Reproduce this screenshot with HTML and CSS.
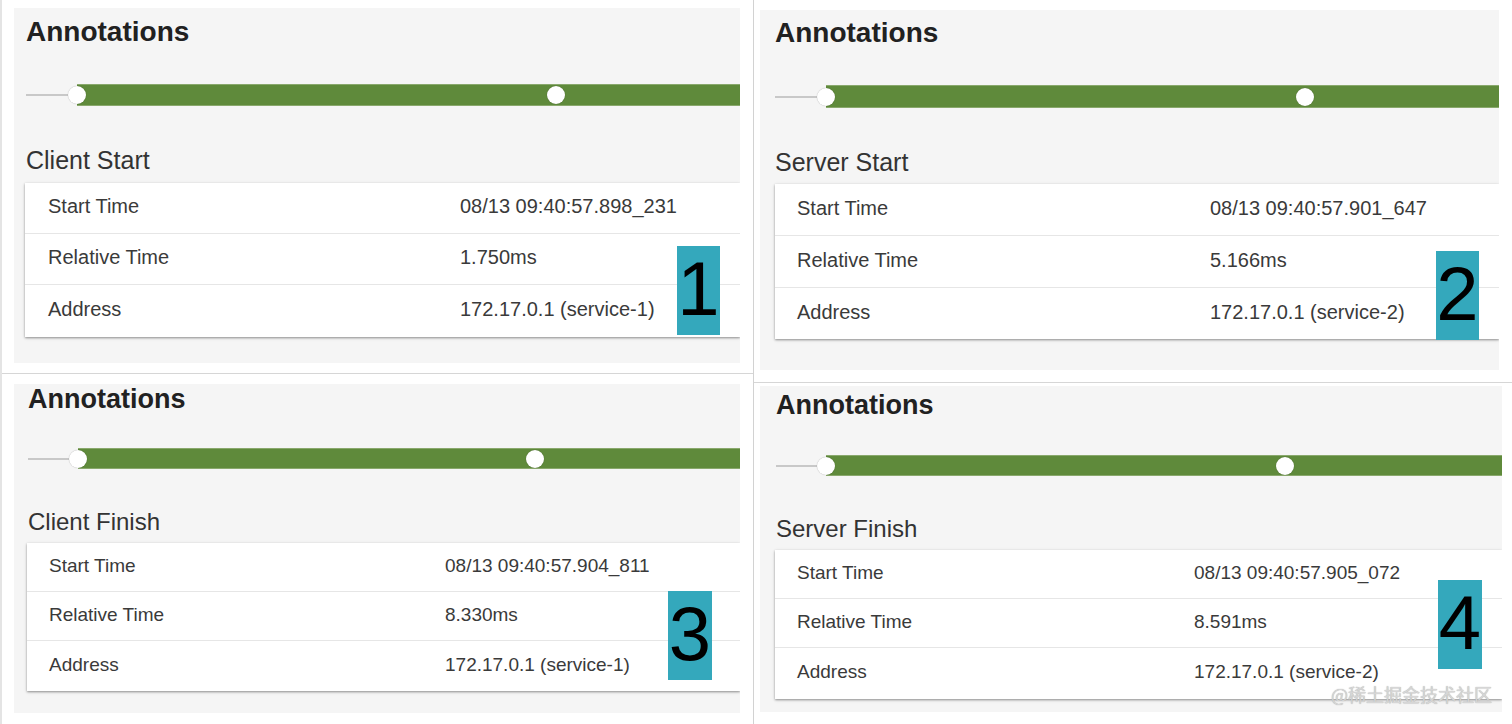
FILE: index.html
```html
<!DOCTYPE html>
<html lang="en">
<head>
<meta charset="utf-8">
<title>Annotations</title>
<link rel="stylesheet" href="styles.css">
</head>
<body>
<div class="board">
  <div class="col col-left">
    <section class="shot shot-1">
      <div class="pane">
        <h2 class="title">Annotations</h2>
        <div class="slider"><span class="rail"></span><span class="range"></span><span class="knob knob-a"></span><span class="knob knob-b"></span></div>
        <h3 class="subtitle">Client Start</h3>
        <div class="card">
          <div class="row"><span>Start Time</span><span>08/13 09:40:57.898_231</span></div>
          <div class="row"><span>Relative Time</span><span>1.750ms</span></div>
          <div class="row"><span>Address</span><span>172.17.0.1 (service-1)</span></div>
        </div>
      </div>
      <div class="badge">1</div>
    </section>
    <section class="shot shot-3">
      <div class="pane">
        <h2 class="title">Annotations</h2>
        <div class="slider"><span class="rail"></span><span class="range"></span><span class="knob knob-a"></span><span class="knob knob-b"></span></div>
        <h3 class="subtitle">Client Finish</h3>
        <div class="card">
          <div class="row"><span>Start Time</span><span>08/13 09:40:57.904_811</span></div>
          <div class="row"><span>Relative Time</span><span>8.330ms</span></div>
          <div class="row"><span>Address</span><span>172.17.0.1 (service-1)</span></div>
        </div>
      </div>
      <div class="badge">3</div>
    </section>
  </div>
  <div class="col col-right">
    <section class="shot shot-2">
      <div class="pane">
        <h2 class="title">Annotations</h2>
        <div class="slider"><span class="rail"></span><span class="range"></span><span class="knob knob-a"></span><span class="knob knob-b"></span></div>
        <h3 class="subtitle">Server Start</h3>
        <div class="card">
          <div class="row"><span>Start Time</span><span>08/13 09:40:57.901_647</span></div>
          <div class="row"><span>Relative Time</span><span>5.166ms</span></div>
          <div class="row"><span>Address</span><span>172.17.0.1 (service-2)</span></div>
        </div>
      </div>
      <div class="badge">2</div>
    </section>
    <section class="shot shot-4">
      <div class="pane">
        <h2 class="title">Annotations</h2>
        <div class="slider"><span class="rail"></span><span class="range"></span><span class="knob knob-a"></span><span class="knob knob-b"></span></div>
        <h3 class="subtitle">Server Finish</h3>
        <div class="card">
          <div class="row"><span>Start Time</span><span>08/13 09:40:57.905_072</span></div>
          <div class="row"><span>Relative Time</span><span>8.591ms</span></div>
          <div class="row"><span>Address</span><span>172.17.0.1 (service-2)</span></div>
        </div>
      </div>
      <div class="badge">4</div>
      <div class="watermark">@稀土掘金技术社区</div>
    </section>
  </div>
</div>
</body>
</html>
```
FILE: styles.css
```css
* { box-sizing: border-box; }

body {
  margin: 0;
  width: 1512px;
  height: 724px;
  overflow: hidden;
  background: #ffffff;
  font-family: "Liberation Sans", Arial, sans-serif;
}

.board {
  display: flex;
  height: 724px;
}

.col {
  display: flex;
  flex-direction: column;
  height: 724px;
}

.col-left {
  width: 754px;
  border-left: 2px solid #e4e4e4;
  border-right: 1px solid #d2d2d2;
}

.col-right {
  flex: 1;
}

.shot {
  position: relative;
  flex: none;
}

.shot-1 { height: 374px; border-bottom: 1px solid #d6d6d6; }
.shot-2 { height: 383px; border-bottom: 1px solid #d6d6d6; }
.shot-3, .shot-4 { flex: 1; min-height: 0; }

.pane {
  background: #f5f5f5;
  overflow-x: clip;
  overflow-y: visible;
  display: flex;
  flex-direction: column;
}

.title {
  margin: 0;
  font-size: 28px;
  line-height: 34px;
  font-weight: bold;
  color: #212121;
}

.slider {
  position: relative;
  display: flex;
  align-items: center;
  height: 22px;
}

.rail {
  flex: none;
  width: 51px;
  height: 2px;
  background: #c8c8c8;
}

.range {
  flex: 1;
  align-self: stretch;
  background: #5f8a3b;
  border-top: 1px solid #89a86c;
  border-bottom: 1px solid #89a86c;
}

.knob {
  position: absolute;
  top: 50%;
  width: 18px;
  height: 18px;
  margin: -9px 0 0 -9px;
  border-radius: 50%;
  background: #ffffff;
  box-shadow: 0 0 1px rgba(0, 0, 0, 0.35);
}

.subtitle {
  margin: 0;
  font-size: 25px;
  line-height: 28px;
  font-weight: normal;
  color: #333333;
}

.card {
  background: #ffffff;
  box-shadow: 0 1px 2px rgba(0, 0, 0, 0.35), 0 1px 4px rgba(0, 0, 0, 0.12);
}

.row {
  display: grid;
  grid-template-columns: 412px 1fr;
  align-items: center;
  height: 51px;
  padding: 0 0 3px 23px;
  font-size: 20px;
  color: #3a3a3a;
  border-bottom: 1px solid #e6e6e6;
  white-space: nowrap;
}

.row:last-child { border-bottom: none; height: 52px; }

.badge {
  position: absolute;
  width: 43px;
  height: 89px;
  background: #34a8bc;
  color: #000000;
  font-size: 76px;
  line-height: 86px;
  text-align: center;
}

.watermark {
  position: absolute;
  left: 577px;
  top: 299px;
  font-family: "Noto Sans CJK SC", "Liberation Sans", sans-serif;
  font-size: 18px;
  line-height: 24px;
  color: #d6d6d6;
  text-shadow: 0 0 1px #a0a0a0;
  white-space: nowrap;
}

/* shot 1: client start */
.shot-1 .pane { margin: 8px 0 0 12px; width: 726px; height: 355px; padding-left: 12px; }
.shot-1 .title { margin-top: 7px; }
.shot-1 .slider { margin-top: 35px; }
.shot-1 .subtitle { margin-top: 40px; }
.shot-1 .card { margin: 9px 0 0 -1px; }
.shot-1 .knob-a { left: 51px; }
.shot-1 .knob-b { left: 530px; }
.shot-1 .badge { left: 675px; top: 246px; }

/* shot 2: server start */
.shot-2 .pane { margin: 10px 0 0 6px; width: 739px; height: 360px; padding-left: 15px; }
.shot-2 .title { margin-top: 6px; }
.shot-2 .slider { margin-top: 35px; height: 23px; }
.shot-2 .subtitle { margin-top: 40px; }
.shot-2 .card { margin-top: 8px; }
.shot-2 .row { padding-left: 22px; grid-template-columns: 413px 1fr; height: 52px; }
.shot-2 .row:last-child { height: 51px; }
.shot-2 .knob-a { left: 51px; }
.shot-2 .knob-b { left: 530px; }
.shot-2 .badge { left: 682px; top: 251px; }

/* shot 3: client finish */
.shot-3 .pane { margin: 10px 0 0 12px; width: 726px; height: 329px; padding-left: 14px; }
.shot-3 .title { margin-top: 0; font-size: 27px; line-height: 30px; }
.shot-3 .slider { margin-top: 34px; height: 21px; }
.shot-3 .rail { width: 50px; }
.shot-3 .subtitle { margin-top: 39px; font-size: 24px; }
.shot-3 .card { margin: 7px 0 0 -1px; }
.shot-3 .row { padding-left: 22px; grid-template-columns: 396px 1fr; height: 49px; font-size: 19px; }
.shot-3 .row:last-child { height: 50px; }
.shot-3 .knob-a { left: 50px; }
.shot-3 .knob-b { left: 507px; }
.shot-3 .badge { left: 666px; top: 217px; width: 44px; }

/* shot 4: server finish */
.shot-4 .pane { margin: 3px 0 0 6px; width: 742px; height: 326px; padding-left: 16px; }
.shot-4 .title { margin-top: 3px; font-size: 27px; line-height: 32px; }
.shot-4 .slider { margin-top: 34px; height: 21px; }
.shot-4 .rail { width: 50px; }
.shot-4 .subtitle { margin-top: 39px; font-size: 24px; }
.shot-4 .card { margin: 7px 0 0 -1px; }
.shot-4 .row { padding-left: 22px; grid-template-columns: 397px 1fr; height: 49px; font-size: 19px; }
.shot-4 .row:last-child { height: 51px; }
.shot-4 .knob-a { left: 50px; }
.shot-4 .knob-b { left: 509px; }
.shot-4 .badge { left: 684px; top: 197px; width: 44px; }
```
